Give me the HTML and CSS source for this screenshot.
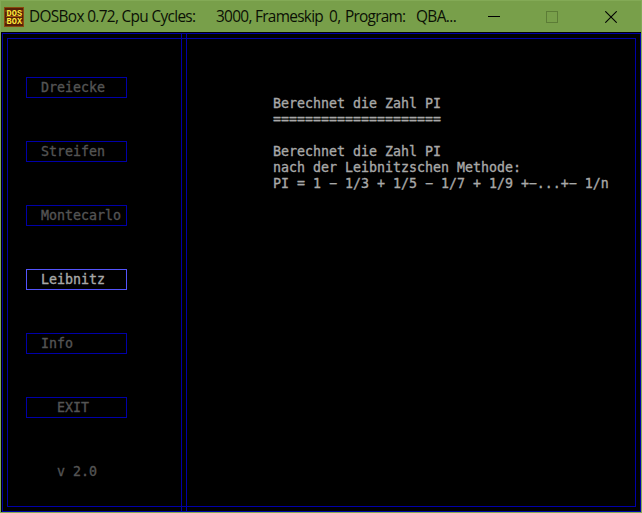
FILE: index.html
```html
<!DOCTYPE html>
<html lang="de">
<head>
<meta charset="utf-8">
<title>DOSBox 0.72</title>
<link rel="stylesheet" href="styles.css">
</head>
<body>
<div class="window">
  <header class="titlebar">
    <svg class="logo" width="20" height="20" viewBox="0 0 20 20">
      <rect width="20" height="20" fill="#8a480e"/>
      <rect x="1" y="1" width="18" height="18" fill="#572006"/>
      <path d="M1 4h2M17 4h2M1 15h2M17 15h2M2 9.5h16" stroke="#9b5310" stroke-width="1"/>
      <text x="2.5" y="8.7" textLength="15.5">DOS</text>
      <text x="2.5" y="17.2" textLength="15.5">BOX</text>
    </svg>
    <div class="caption">
      <span class="c1">DOSBox 0.72, Cpu Cycles:</span>
      <span class="c2">3000, Frameskip</span>
      <span class="c3">0,</span>
      <span class="c4">Program:</span>
      <span class="c5">QBA...</span>
    </div>
    <div class="controls">
      <svg width="12" height="12"><path d="M0 5.5h12" stroke="#000"/></svg>
      <svg width="12" height="12"><rect x=".5" y=".5" width="11" height="11" fill="none" stroke="#5c7c36"/></svg>
      <svg class="close" width="12" height="12"><path d="M.3 .3l11.4 11.4M11.7 .3L.3 11.7" stroke="#000" stroke-width="1.1"/></svg>
    </div>
  </header>
  <div class="screen">
    <div class="outer">
      <nav class="menu">
        <div class="item">Dreiecke</div>
        <div class="item">Streifen</div>
        <div class="item">Montecarlo</div>
        <div class="item active">Leibnitz</div>
        <div class="item">Info</div>
        <div class="item exit">EXIT</div>
        <div class="version">v 2.0</div>
      </nav>
      <main class="text">
        <div>Berechnet die Zahl PI</div>
        <div>=====================</div>
        <div>&nbsp;</div>
        <div>Berechnet die Zahl PI</div>
        <div>nach der Leibnitzschen Methode:</div>
        <div>PI = 1 − 1/3 + 1/5 − 1/7 + 1/9 +−...+− 1/n</div>
      </main>
      <div class="frame"></div>
    </div>
  </div>
</div>
</body>
</html>
```
FILE: styles.css
```css
* { box-sizing: border-box; }
body { margin: 0; background: #789f4a; }
svg { display: block; }
.window {
  width: 642px; height: 513px; overflow: hidden;
  background: #789f4a;
  border: 1px solid #83aa56;
  display: flex; flex-direction: column;
}
.titlebar {
  height: 31px; flex: none;
  display: flex; align-items: center;
  padding-left: 3px;
}
.logo text {
  font: bold 8.5px "Liberation Mono", monospace;
  fill: #ffec3c;
}
.caption {
  display: grid;
  grid-template-columns: 187px 113px 16px 71px 60px;
  margin-left: 5px; width: 447px;
  font: 15.4px/30px "Open Sans", "Noto Sans", sans-serif;
  color: #0b1005; white-space: pre;
}
.c1 { letter-spacing: -0.67px; }
.c2 { letter-spacing: -0.7px; }
.c3 { letter-spacing: -0.5px; }
.c4 { letter-spacing: -0.75px; }
.c5 { letter-spacing: -0.6px; }
.controls { display: flex; gap: 46px; margin-left: 12px; }
.close { margin-left: 1px; }
.screen {
  height: 480px; flex: none;
  background: #000; padding: 1px 0 0 1px;
  font: 13.29px/16px "DejaVu Sans Mono", monospace;
  color: #a8a8a8;
}
.outer {
  position: relative;
  width: 639px; height: 479px;
  border: 1px solid #0000a8;
  display: grid; grid-template-columns: 184px 1fr;
}
.frame {
  position: absolute; inset: 4px;
  border: 1px solid #0000a8;
}
.menu {
  border-right: 1px solid #0000a8;
  padding: 43px 0 0 23px;
  display: flex; flex-direction: column; gap: 43px;
  color: #545454;
  background: linear-gradient(#0000a8, #0000a8) 178px 0 / 1px 100% no-repeat;
}
.item {
  width: 101px; height: 21px;
  border: 1px solid #0000a8;
  padding: 2px 0 0 14px;
}
.active { border-color: #5454fc; color: #a8a8a8; }
.exit { padding-left: 30px; }
.version { padding: 3px 0 0 31px; }
.text { padding: 62px 0 0 86px; }
.text div { white-space: pre; }
.item, .version, .text { -webkit-text-stroke: 0.35px currentColor; }
```
